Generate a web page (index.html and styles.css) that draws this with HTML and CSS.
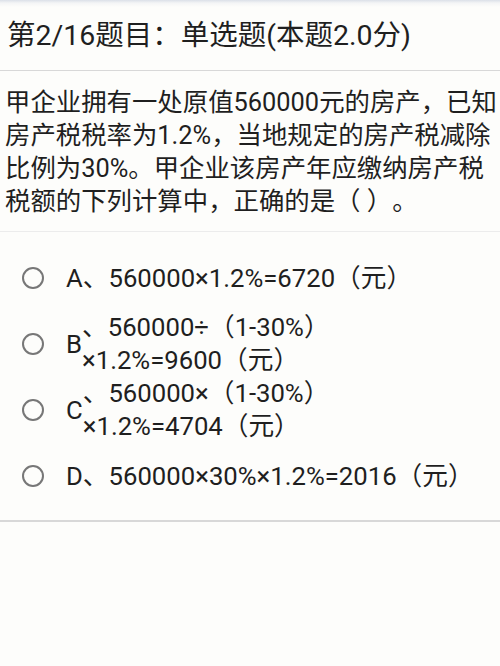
FILE: index.html
```html
<!DOCTYPE html>
<html lang="zh-CN">
<head>
<meta charset="utf-8">
<title>单选题</title>
<link rel="stylesheet" href="styles.css">
</head>
<body>
<div class="page">
  <header class="title-bar">
    <h1 class="title">第2/16题目：单选题(本题2.0分)</h1>
  </header>
  <section class="question">
    <p class="stem">甲企业拥有一处原值560000元的房产，已知房产税税率为1.2%，当地规定的房产税减除比例为30%。甲企业该房产年应缴纳房产税税额的下列计算中，正确的是（ ）。</p>
  </section>
  <ul class="options">
    <li class="option"><span class="radio"></span><span class="key">A</span><span class="text">、560000×1.2%=6720（元）</span></li>
    <li class="option"><span class="radio"></span><span class="key">B</span><span class="text">、560000÷（1-30%）<br>×1.2%=9600（元）</span></li>
    <li class="option"><span class="radio"></span><span class="key">C</span><span class="text">、560000×（1-30%）<br>×1.2%=4704（元）</span></li>
    <li class="option"><span class="radio"></span><span class="key">D</span><span class="text">、560000×30%×1.2%=2016（元）</span></li>
  </ul>
</div>
</body>
</html>
```
FILE: styles.css
```css
html, body {
  margin: 0;
  padding: 0;
  background: #fdfdfb;
}
body {
  font-family: Roboto, "Noto Sans CJK SC", sans-serif;
  color: #1f1f1f;
  width: 500px;
  height: 666px;
  overflow: hidden;
  text-spacing-trim: space-all;
}
.title-bar {
  height: 70px;
  border-bottom: 1px solid #d8d8d8;
  background: linear-gradient(#dbe0e8 0, #f4f5f6 3px, #fdfdfb 7px);
  display: flex;
  align-items: center;
  padding-left: 7px;
}
.title {
  margin: 0;
  font-size: 28.5px;
  font-weight: normal;
  line-height: 36px;
  padding-top: 2px;
}
.question {
  padding: 15px 0 13px 5px;
  border-bottom: 1px solid #ececec;
}
.stem {
  margin: 0;
  font-size: 25.4px;
  line-height: 33px;
}
.options {
  list-style: none;
  margin: 0;
  padding: 13px 0 11px;
  border-bottom: 2px solid #d8d8d8;
}
.option {
  display: flex;
  align-items: center;
  min-height: 66px;
  padding-left: 22px;
  font-size: 25.7px;
  line-height: 33px;
}
.radio {
  width: 22px;
  height: 22px;
  box-sizing: border-box;
  border: 2.5px solid #777;
  border-radius: 50%;
  flex: none;
}
.key {
  margin-left: 22px;
  flex: none;
}
.text {
  flex: 1;
  padding-right: 10px;
}
```
